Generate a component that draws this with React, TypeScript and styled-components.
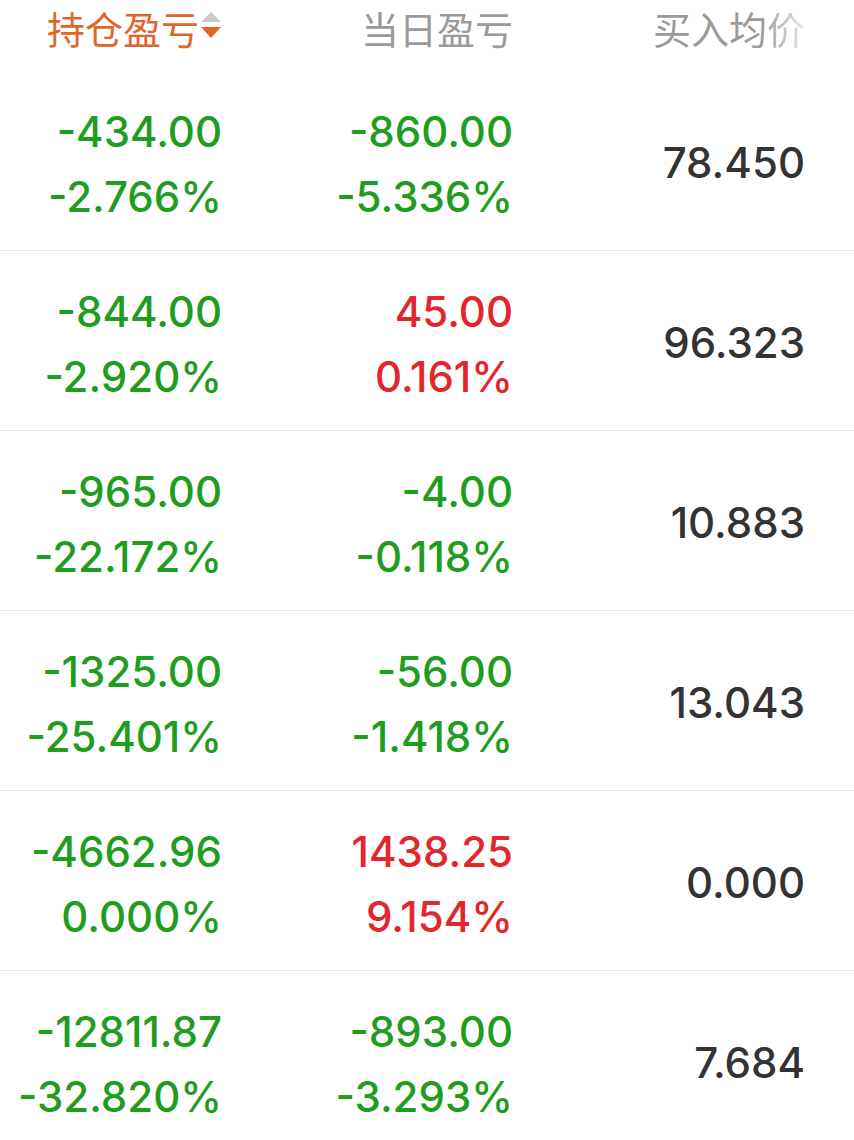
import React, { ReactElement } from 'react';
import styled, { createGlobalStyle } from 'styled-components';

const GlobalStyle = createGlobalStyle`
  html, body {
    margin: 0;
    padding: 0;
    background: #ffffff;
  }
  body {
    font-family: Inter, "Liberation Sans", "Noto Sans CJK SC", sans-serif;
  }
`;

type Trend = 'up' | 'down' | 'flat';

interface HoldingRow {
  id: string;
  profit: string;
  profitRate: string;
  profitTrend: Trend;
  today: string;
  todayRate: string;
  todayTrend: Trend;
  avgPrice: string;
}

const rows: HoldingRow[] = [
  { id: 'a', profit: '-434.00', profitRate: '-2.766%', profitTrend: 'down', today: '-860.00', todayRate: '-5.336%', todayTrend: 'down', avgPrice: '78.450' },
  { id: 'b', profit: '-844.00', profitRate: '-2.920%', profitTrend: 'down', today: '45.00', todayRate: '0.161%', todayTrend: 'up', avgPrice: '96.323' },
  { id: 'c', profit: '-965.00', profitRate: '-22.172%', profitTrend: 'down', today: '-4.00', todayRate: '-0.118%', todayTrend: 'down', avgPrice: '10.883' },
  { id: 'd', profit: '-1325.00', profitRate: '-25.401%', profitTrend: 'down', today: '-56.00', todayRate: '-1.418%', todayTrend: 'down', avgPrice: '13.043' },
  { id: 'e', profit: '-4662.96', profitRate: '0.000%', profitTrend: 'down', today: '1438.25', todayRate: '9.154%', todayTrend: 'up', avgPrice: '0.000' },
  { id: 'f', profit: '-12811.87', profitRate: '-32.820%', profitTrend: 'down', today: '-893.00', todayRate: '-3.293%', todayTrend: 'down', avgPrice: '7.684' },
];

const trendColor = (trend: Trend): string => {
  switch (trend) {
    case 'up':
      return '#e3262b';
    case 'down':
      return '#1f9d1f';
    default:
      return '#333333';
  }
};

const Table = styled.div`
  width: 854px;
  background: #fff;
  overflow: hidden;
`;

const Grid = styled.div`
  display: grid;
  grid-template-columns: 222px 291px 292px;
  padding-right: 49px;
`;

const Header = styled(Grid)`
  height: 71px;
  align-items: start;
`;

interface HeadCellProps {
  active?: boolean;
}

const HeadCell = styled.div<HeadCellProps>`
  display: flex;
  justify-content: flex-end;
  align-items: center;
  height: 56px;
  line-height: 56px;
  font-family: "Noto Sans CJK SC", sans-serif;
  font-size: 38px;
  color: ${props => props.active ? '#e0652b' : '#9a9a9a'};
  white-space: nowrap;
`;

const Fade = styled.span`
  background: linear-gradient(to right, #a8a8a8 0%, #e6e6e6 100%);
  -webkit-background-clip: text;
  background-clip: text;
  color: transparent;
`;

const SortIcon = styled.svg`
  width: 22px;
  height: 30px;
  margin-left: 1px;
  margin-bottom: 4px;
`;

const Row = styled(Grid)`
  box-sizing: border-box;
  height: 180px;
  border-bottom: 1px solid #e9e9e9;
  align-items: center;
`;

const Stack = styled.div`
  display: flex;
  flex-direction: column;
  align-items: flex-end;
  padding-top: 7px;
`;

interface ValueProps {
  trend: Trend;
}

const Value = styled.div<ValueProps>`
  font-size: 42px;
  font-weight: 500;
  line-height: 65px;
  color: ${props => trendColor(props.trend)};
  white-space: nowrap;
`;

const Price = styled.div`
  font-size: 42px;
  font-weight: 500;
  line-height: 65px;
  color: #333333;
  text-align: right;
  padding-top: 3px;
`;

const HoldingItem = ({ row }: { row: HoldingRow }): ReactElement => (
  <Row>
    <Stack>
      <Value trend={row.profitTrend}>{row.profit}</Value>
      <Value trend={row.profitTrend}>{row.profitRate}</Value>
    </Stack>
    <Stack>
      <Value trend={row.todayTrend}>{row.today}</Value>
      <Value trend={row.todayTrend}>{row.todayRate}</Value>
    </Stack>
    <Price>{row.avgPrice}</Price>
  </Row>
);

const App = (): ReactElement => (
  <>
    <GlobalStyle />
    <Table>
      <Header>
        <HeadCell active>
          持仓盈亏
          <SortIcon viewBox="0 0 22 30">
            <polygon points="1,11 11,1 21,11" fill="#c9c9c9" />
            <polygon points="1,16 21,16 11,27" fill="#e8641f" />
          </SortIcon>
        </HeadCell>
        <HeadCell>当日盈亏</HeadCell>
        <HeadCell>
          买入均<Fade>价</Fade>
        </HeadCell>
      </Header>
      {rows.map(row => <HoldingItem key={row.id} row={row} />)}
    </Table>
  </>
);

export default App;
